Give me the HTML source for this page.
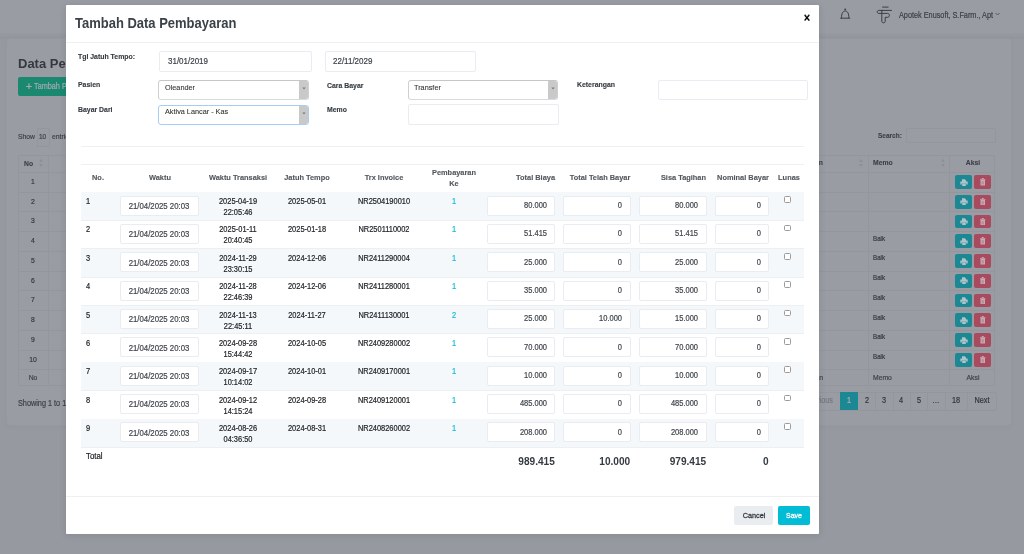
<!DOCTYPE html>
<html><head><meta charset="utf-8"><style>
html,body{margin:0;padding:0;}
body{width:1024px;height:554px;overflow:hidden;position:relative;background:rgb(150,153,160);font-family:"Liberation Sans",sans-serif;}
.t{position:absolute;white-space:nowrap;}
.b{position:absolute;}
</style></head><body>
<div id="root" style="position:absolute;left:0;top:0;width:1024px;height:554px;overflow:hidden;will-change:transform;background:rgb(150,153,160);">
<div class="b" style="left:0px;top:0px;width:1024px;height:33px;background:rgb(153,156,163);"></div>
<div class="b" style="left:0px;top:33.5px;width:1024px;height:5.0px;background:linear-gradient(rgb(150,153,160),rgb(146,149,156));"></div>
<div class="b" style="left:7px;top:38.5px;width:1003.5px;height:386.0px;background:rgb(153,156,163);border-radius:3px;box-shadow:0 0 0 1px rgb(149,152,159),0 1px 4px rgb(145,148,155);"></div>
<div class="t" style="left:18px;transform-origin:0 50%;top:53.64px;line-height:20px;font-size:12.35px;font-weight:bold;color:rgb(52,56,63);transform:scaleX(1.0526);">Data Pembayaran Piutang</div>
<div class="b" style="left:18px;top:76.7px;width:112px;height:19.700000000000003px;background:rgb(26,137,112);border-radius:2px;"></div>
<div class="t" style="left:25.8px;transform-origin:0 50%;top:76.09px;line-height:20px;font-size:8.00px;font-weight:normal;color:rgb(165,170,175);-webkit-text-stroke:0.2px rgb(165,170,175);font-size:11px;">+</div>
<div class="t" style="left:34.3px;transform-origin:0 50%;top:76.10px;line-height:20px;font-size:8.61px;font-weight:normal;color:rgb(165,170,175);transform:scaleX(0.8475);-webkit-text-stroke:0.2px rgb(165,170,175);">Tambah Pembayaran</div>
<div class="t" style="left:18px;transform-origin:0 50%;top:127.09px;line-height:20px;font-size:8.02px;font-weight:normal;color:rgb(60,64,72);transform:scaleX(0.8475);-webkit-text-stroke:0.2px rgb(60,64,72);">Show</div>
<div class="b" style="left:37.3px;top:127.5px;width:12.5px;height:19.5px;border:1px solid rgb(147,150,157);border-radius:2px;background:rgb(153,156,163);box-sizing:border-box;"></div>
<div class="t" style="left:38.5px;transform-origin:0 50%;top:127.09px;line-height:20px;font-size:7.67px;font-weight:normal;color:rgb(60,64,72);transform:scaleX(0.8475);-webkit-text-stroke:0.2px rgb(60,64,72);">10</div>
<div class="t" style="left:52px;transform-origin:0 50%;top:127.09px;line-height:20px;font-size:8.02px;font-weight:normal;color:rgb(60,64,72);transform:scaleX(0.8475);-webkit-text-stroke:0.2px rgb(60,64,72);">entries</div>
<div class="t" style="left:878px;transform-origin:0 50%;top:125.79px;line-height:20px;font-size:7.67px;font-weight:bold;color:rgb(60,64,72);transform:scaleX(0.8475);-webkit-text-stroke:0.12px rgb(60,64,72);">Search:</div>
<div class="b" style="left:905.7px;top:127.6px;width:90.5px;height:15.700000000000017px;border:1px solid rgb(147,150,157);border-radius:2px;box-sizing:border-box;"></div>
<div class="b" style="left:18.4px;top:154.5px;width:977.1px;height:231.8px;border:1px solid rgb(147,150,157);box-sizing:border-box;"></div>
<div class="b" style="left:18.4px;top:171.8px;width:977.1px;height:1.0px;background:rgb(147,150,157);"></div>
<div class="b" style="left:18.4px;top:191.55px;width:977.1px;height:1.0px;background:rgb(147,150,157);"></div>
<div class="b" style="left:18.4px;top:211.3px;width:977.1px;height:1.0px;background:rgb(147,150,157);"></div>
<div class="b" style="left:18.4px;top:231.05px;width:977.1px;height:1.0px;background:rgb(147,150,157);"></div>
<div class="b" style="left:18.4px;top:250.8px;width:977.1px;height:1.0px;background:rgb(147,150,157);"></div>
<div class="b" style="left:18.4px;top:270.55px;width:977.1px;height:1.0px;background:rgb(147,150,157);"></div>
<div class="b" style="left:18.4px;top:290.3px;width:977.1px;height:1.0px;background:rgb(147,150,157);"></div>
<div class="b" style="left:18.4px;top:310.05px;width:977.1px;height:1.0px;background:rgb(147,150,157);"></div>
<div class="b" style="left:18.4px;top:329.8px;width:977.1px;height:1.0px;background:rgb(147,150,157);"></div>
<div class="b" style="left:18.4px;top:349.55px;width:977.1px;height:1.0px;background:rgb(147,150,157);"></div>
<div class="b" style="left:18.4px;top:369.3px;width:977.1px;height:1.0px;background:rgb(147,150,157);"></div>
<div class="b" style="left:48px;top:154.5px;width:1px;height:231.8px;background:rgb(147,150,157);"></div>
<div class="b" style="left:868px;top:154.5px;width:1px;height:231.8px;background:rgb(147,150,157);"></div>
<div class="b" style="left:949px;top:154.5px;width:1px;height:231.8px;background:rgb(147,150,157);"></div>
<div class="t" style="left:23.5px;transform-origin:0 50%;top:153.59px;line-height:20px;font-size:8.02px;font-weight:bold;color:rgb(60,64,72);transform:scaleX(0.8475);-webkit-text-stroke:0.12px rgb(60,64,72);">No</div>
<div class="b" style="left:38.5px;top:158.5px;width:0;height:0;border-left:2px solid transparent;border-right:2px solid transparent;border-bottom:3px solid rgb(140,144,150);"></div>
<div class="b" style="left:38.5px;top:163.5px;width:0;height:0;border-left:2px solid transparent;border-right:2px solid transparent;border-top:3px solid rgb(140,144,150);"></div>
<div class="b" style="left:858.5px;top:158.5px;width:0;height:0;border-left:2px solid transparent;border-right:2px solid transparent;border-bottom:3px solid rgb(140,144,150);"></div>
<div class="b" style="left:858.5px;top:163.5px;width:0;height:0;border-left:2px solid transparent;border-right:2px solid transparent;border-top:3px solid rgb(140,144,150);"></div>
<div class="b" style="left:940.5px;top:158.5px;width:0;height:0;border-left:2px solid transparent;border-right:2px solid transparent;border-bottom:3px solid rgb(140,144,150);"></div>
<div class="b" style="left:940.5px;top:163.5px;width:0;height:0;border-left:2px solid transparent;border-right:2px solid transparent;border-top:3px solid rgb(140,144,150);"></div>
<div class="t" style="left:872.5px;transform-origin:0 50%;top:153.09px;line-height:20px;font-size:8.02px;font-weight:bold;color:rgb(60,64,72);transform:scaleX(0.8475);-webkit-text-stroke:0.12px rgb(60,64,72);">Memo</div>
<div class="t" style="left:522.5px;width:300px;text-align:right;transform-origin:100% 50%;top:153.09px;line-height:20px;font-size:8.02px;font-weight:bold;color:rgb(60,64,72);transform:scaleX(0.8475);-webkit-text-stroke:0.12px rgb(60,64,72);">Keterangan</div>
<div class="t" style="left:822.5px;width:300px;text-align:center;transform-origin:50% 50%;top:153.09px;line-height:20px;font-size:8.02px;font-weight:bold;color:rgb(60,64,72);transform:scaleX(0.8475);-webkit-text-stroke:0.12px rgb(60,64,72);">Aksi</div>
<div class="t" style="left:-117px;width:300px;text-align:center;transform-origin:50% 50%;top:171.79px;line-height:20px;font-size:8.02px;font-weight:normal;color:rgb(52,56,63);transform:scaleX(0.8475);-webkit-text-stroke:0.2px rgb(52,56,63);">1</div>
<div class="b" style="left:954.5px;top:175.1px;width:17.700000000000045px;height:13.900000000000006px;background:rgb(27,136,148);border-radius:2px;"></div>
<div class="b" style="left:974px;top:175.1px;width:17px;height:13.900000000000006px;background:rgb(168,75,95);border-radius:2px;"></div>
<svg class="b" style="left:959.5px;top:178.5px" width="8" height="7.4" viewBox="0 0 8 7.4"><path d="M2 0.3h2.9l1.1 1.1v1.2H2z M0.3 2.6h7.4v2.9H6.2v-1.3H1.8v1.3H0.3z M2.2 4.6h3.6v2.5H2.2z" fill="rgb(175,195,200)"/></svg>
<svg class="b" style="left:980px;top:178.1px" width="5.5" height="7.6" viewBox="0 0 5.5 7.6"><path d="M0 0.9h5.5v0.9H0z M1.8 0.1h1.9v0.9H1.8z M0.5 2.1h4.5v5.4H0.5z" fill="rgb(200,170,178)"/><rect x="1.7" y="3.2" width="2.1" height="3.2" fill="rgb(185,140,150)"/></svg>
<div class="t" style="left:-117px;width:300px;text-align:center;transform-origin:50% 50%;top:191.54px;line-height:20px;font-size:8.02px;font-weight:normal;color:rgb(52,56,63);transform:scaleX(0.8475);-webkit-text-stroke:0.2px rgb(52,56,63);">2</div>
<div class="b" style="left:954.5px;top:194.85px;width:17.700000000000045px;height:13.900000000000006px;background:rgb(27,136,148);border-radius:2px;"></div>
<div class="b" style="left:974px;top:194.85px;width:17px;height:13.900000000000006px;background:rgb(168,75,95);border-radius:2px;"></div>
<svg class="b" style="left:959.5px;top:198.25px" width="8" height="7.4" viewBox="0 0 8 7.4"><path d="M2 0.3h2.9l1.1 1.1v1.2H2z M0.3 2.6h7.4v2.9H6.2v-1.3H1.8v1.3H0.3z M2.2 4.6h3.6v2.5H2.2z" fill="rgb(175,195,200)"/></svg>
<svg class="b" style="left:980px;top:197.85px" width="5.5" height="7.6" viewBox="0 0 5.5 7.6"><path d="M0 0.9h5.5v0.9H0z M1.8 0.1h1.9v0.9H1.8z M0.5 2.1h4.5v5.4H0.5z" fill="rgb(200,170,178)"/><rect x="1.7" y="3.2" width="2.1" height="3.2" fill="rgb(185,140,150)"/></svg>
<div class="t" style="left:-117px;width:300px;text-align:center;transform-origin:50% 50%;top:211.29px;line-height:20px;font-size:8.02px;font-weight:normal;color:rgb(52,56,63);transform:scaleX(0.8475);-webkit-text-stroke:0.2px rgb(52,56,63);">3</div>
<div class="b" style="left:954.5px;top:214.6px;width:17.700000000000045px;height:13.900000000000006px;background:rgb(27,136,148);border-radius:2px;"></div>
<div class="b" style="left:974px;top:214.6px;width:17px;height:13.900000000000006px;background:rgb(168,75,95);border-radius:2px;"></div>
<svg class="b" style="left:959.5px;top:218.0px" width="8" height="7.4" viewBox="0 0 8 7.4"><path d="M2 0.3h2.9l1.1 1.1v1.2H2z M0.3 2.6h7.4v2.9H6.2v-1.3H1.8v1.3H0.3z M2.2 4.6h3.6v2.5H2.2z" fill="rgb(175,195,200)"/></svg>
<svg class="b" style="left:980px;top:217.6px" width="5.5" height="7.6" viewBox="0 0 5.5 7.6"><path d="M0 0.9h5.5v0.9H0z M1.8 0.1h1.9v0.9H1.8z M0.5 2.1h4.5v5.4H0.5z" fill="rgb(200,170,178)"/><rect x="1.7" y="3.2" width="2.1" height="3.2" fill="rgb(185,140,150)"/></svg>
<div class="t" style="left:-117px;width:300px;text-align:center;transform-origin:50% 50%;top:231.04px;line-height:20px;font-size:8.02px;font-weight:normal;color:rgb(52,56,63);transform:scaleX(0.8475);-webkit-text-stroke:0.2px rgb(52,56,63);">4</div>
<div class="t" style="left:872.9px;transform-origin:0 50%;top:228.53px;line-height:20px;font-size:7.32px;font-weight:normal;color:rgb(52,56,63);transform:scaleX(0.8475);-webkit-text-stroke:0.2px rgb(52,56,63);">Baik</div>
<div class="b" style="left:954.5px;top:234.35px;width:17.700000000000045px;height:13.900000000000006px;background:rgb(27,136,148);border-radius:2px;"></div>
<div class="b" style="left:974px;top:234.35px;width:17px;height:13.900000000000006px;background:rgb(168,75,95);border-radius:2px;"></div>
<svg class="b" style="left:959.5px;top:237.75px" width="8" height="7.4" viewBox="0 0 8 7.4"><path d="M2 0.3h2.9l1.1 1.1v1.2H2z M0.3 2.6h7.4v2.9H6.2v-1.3H1.8v1.3H0.3z M2.2 4.6h3.6v2.5H2.2z" fill="rgb(175,195,200)"/></svg>
<svg class="b" style="left:980px;top:237.35px" width="5.5" height="7.6" viewBox="0 0 5.5 7.6"><path d="M0 0.9h5.5v0.9H0z M1.8 0.1h1.9v0.9H1.8z M0.5 2.1h4.5v5.4H0.5z" fill="rgb(200,170,178)"/><rect x="1.7" y="3.2" width="2.1" height="3.2" fill="rgb(185,140,150)"/></svg>
<div class="t" style="left:-117px;width:300px;text-align:center;transform-origin:50% 50%;top:250.79px;line-height:20px;font-size:8.02px;font-weight:normal;color:rgb(52,56,63);transform:scaleX(0.8475);-webkit-text-stroke:0.2px rgb(52,56,63);">5</div>
<div class="t" style="left:872.9px;transform-origin:0 50%;top:248.28px;line-height:20px;font-size:7.32px;font-weight:normal;color:rgb(52,56,63);transform:scaleX(0.8475);-webkit-text-stroke:0.2px rgb(52,56,63);">Baik</div>
<div class="b" style="left:954.5px;top:254.1px;width:17.700000000000045px;height:13.900000000000006px;background:rgb(27,136,148);border-radius:2px;"></div>
<div class="b" style="left:974px;top:254.1px;width:17px;height:13.900000000000006px;background:rgb(168,75,95);border-radius:2px;"></div>
<svg class="b" style="left:959.5px;top:257.5px" width="8" height="7.4" viewBox="0 0 8 7.4"><path d="M2 0.3h2.9l1.1 1.1v1.2H2z M0.3 2.6h7.4v2.9H6.2v-1.3H1.8v1.3H0.3z M2.2 4.6h3.6v2.5H2.2z" fill="rgb(175,195,200)"/></svg>
<svg class="b" style="left:980px;top:257.1px" width="5.5" height="7.6" viewBox="0 0 5.5 7.6"><path d="M0 0.9h5.5v0.9H0z M1.8 0.1h1.9v0.9H1.8z M0.5 2.1h4.5v5.4H0.5z" fill="rgb(200,170,178)"/><rect x="1.7" y="3.2" width="2.1" height="3.2" fill="rgb(185,140,150)"/></svg>
<div class="t" style="left:-117px;width:300px;text-align:center;transform-origin:50% 50%;top:270.54px;line-height:20px;font-size:8.02px;font-weight:normal;color:rgb(52,56,63);transform:scaleX(0.8475);-webkit-text-stroke:0.2px rgb(52,56,63);">6</div>
<div class="t" style="left:872.9px;transform-origin:0 50%;top:268.03px;line-height:20px;font-size:7.32px;font-weight:normal;color:rgb(52,56,63);transform:scaleX(0.8475);-webkit-text-stroke:0.2px rgb(52,56,63);">Baik</div>
<div class="b" style="left:954.5px;top:273.85px;width:17.700000000000045px;height:13.899999999999977px;background:rgb(27,136,148);border-radius:2px;"></div>
<div class="b" style="left:974px;top:273.85px;width:17px;height:13.899999999999977px;background:rgb(168,75,95);border-radius:2px;"></div>
<svg class="b" style="left:959.5px;top:277.25px" width="8" height="7.4" viewBox="0 0 8 7.4"><path d="M2 0.3h2.9l1.1 1.1v1.2H2z M0.3 2.6h7.4v2.9H6.2v-1.3H1.8v1.3H0.3z M2.2 4.6h3.6v2.5H2.2z" fill="rgb(175,195,200)"/></svg>
<svg class="b" style="left:980px;top:276.85px" width="5.5" height="7.6" viewBox="0 0 5.5 7.6"><path d="M0 0.9h5.5v0.9H0z M1.8 0.1h1.9v0.9H1.8z M0.5 2.1h4.5v5.4H0.5z" fill="rgb(200,170,178)"/><rect x="1.7" y="3.2" width="2.1" height="3.2" fill="rgb(185,140,150)"/></svg>
<div class="t" style="left:-117px;width:300px;text-align:center;transform-origin:50% 50%;top:290.29px;line-height:20px;font-size:8.02px;font-weight:normal;color:rgb(52,56,63);transform:scaleX(0.8475);-webkit-text-stroke:0.2px rgb(52,56,63);">7</div>
<div class="t" style="left:872.9px;transform-origin:0 50%;top:287.78px;line-height:20px;font-size:7.32px;font-weight:normal;color:rgb(52,56,63);transform:scaleX(0.8475);-webkit-text-stroke:0.2px rgb(52,56,63);">Baik</div>
<div class="b" style="left:954.5px;top:293.6px;width:17.700000000000045px;height:13.899999999999977px;background:rgb(27,136,148);border-radius:2px;"></div>
<div class="b" style="left:974px;top:293.6px;width:17px;height:13.899999999999977px;background:rgb(168,75,95);border-radius:2px;"></div>
<svg class="b" style="left:959.5px;top:297.0px" width="8" height="7.4" viewBox="0 0 8 7.4"><path d="M2 0.3h2.9l1.1 1.1v1.2H2z M0.3 2.6h7.4v2.9H6.2v-1.3H1.8v1.3H0.3z M2.2 4.6h3.6v2.5H2.2z" fill="rgb(175,195,200)"/></svg>
<svg class="b" style="left:980px;top:296.6px" width="5.5" height="7.6" viewBox="0 0 5.5 7.6"><path d="M0 0.9h5.5v0.9H0z M1.8 0.1h1.9v0.9H1.8z M0.5 2.1h4.5v5.4H0.5z" fill="rgb(200,170,178)"/><rect x="1.7" y="3.2" width="2.1" height="3.2" fill="rgb(185,140,150)"/></svg>
<div class="t" style="left:-117px;width:300px;text-align:center;transform-origin:50% 50%;top:310.04px;line-height:20px;font-size:8.02px;font-weight:normal;color:rgb(52,56,63);transform:scaleX(0.8475);-webkit-text-stroke:0.2px rgb(52,56,63);">8</div>
<div class="t" style="left:872.9px;transform-origin:0 50%;top:307.53px;line-height:20px;font-size:7.32px;font-weight:normal;color:rgb(52,56,63);transform:scaleX(0.8475);-webkit-text-stroke:0.2px rgb(52,56,63);">Baik</div>
<div class="b" style="left:954.5px;top:313.35px;width:17.700000000000045px;height:13.899999999999977px;background:rgb(27,136,148);border-radius:2px;"></div>
<div class="b" style="left:974px;top:313.35px;width:17px;height:13.899999999999977px;background:rgb(168,75,95);border-radius:2px;"></div>
<svg class="b" style="left:959.5px;top:316.75px" width="8" height="7.4" viewBox="0 0 8 7.4"><path d="M2 0.3h2.9l1.1 1.1v1.2H2z M0.3 2.6h7.4v2.9H6.2v-1.3H1.8v1.3H0.3z M2.2 4.6h3.6v2.5H2.2z" fill="rgb(175,195,200)"/></svg>
<svg class="b" style="left:980px;top:316.35px" width="5.5" height="7.6" viewBox="0 0 5.5 7.6"><path d="M0 0.9h5.5v0.9H0z M1.8 0.1h1.9v0.9H1.8z M0.5 2.1h4.5v5.4H0.5z" fill="rgb(200,170,178)"/><rect x="1.7" y="3.2" width="2.1" height="3.2" fill="rgb(185,140,150)"/></svg>
<div class="t" style="left:-117px;width:300px;text-align:center;transform-origin:50% 50%;top:329.79px;line-height:20px;font-size:8.02px;font-weight:normal;color:rgb(52,56,63);transform:scaleX(0.8475);-webkit-text-stroke:0.2px rgb(52,56,63);">9</div>
<div class="t" style="left:872.9px;transform-origin:0 50%;top:327.28px;line-height:20px;font-size:7.32px;font-weight:normal;color:rgb(52,56,63);transform:scaleX(0.8475);-webkit-text-stroke:0.2px rgb(52,56,63);">Baik</div>
<div class="b" style="left:954.5px;top:333.1px;width:17.700000000000045px;height:13.899999999999977px;background:rgb(27,136,148);border-radius:2px;"></div>
<div class="b" style="left:974px;top:333.1px;width:17px;height:13.899999999999977px;background:rgb(168,75,95);border-radius:2px;"></div>
<svg class="b" style="left:959.5px;top:336.5px" width="8" height="7.4" viewBox="0 0 8 7.4"><path d="M2 0.3h2.9l1.1 1.1v1.2H2z M0.3 2.6h7.4v2.9H6.2v-1.3H1.8v1.3H0.3z M2.2 4.6h3.6v2.5H2.2z" fill="rgb(175,195,200)"/></svg>
<svg class="b" style="left:980px;top:336.1px" width="5.5" height="7.6" viewBox="0 0 5.5 7.6"><path d="M0 0.9h5.5v0.9H0z M1.8 0.1h1.9v0.9H1.8z M0.5 2.1h4.5v5.4H0.5z" fill="rgb(200,170,178)"/><rect x="1.7" y="3.2" width="2.1" height="3.2" fill="rgb(185,140,150)"/></svg>
<div class="t" style="left:-117px;width:300px;text-align:center;transform-origin:50% 50%;top:349.54px;line-height:20px;font-size:8.02px;font-weight:normal;color:rgb(52,56,63);transform:scaleX(0.8475);-webkit-text-stroke:0.2px rgb(52,56,63);">10</div>
<div class="t" style="left:872.9px;transform-origin:0 50%;top:347.03px;line-height:20px;font-size:7.32px;font-weight:normal;color:rgb(52,56,63);transform:scaleX(0.8475);-webkit-text-stroke:0.2px rgb(52,56,63);">Baik</div>
<div class="b" style="left:954.5px;top:352.85px;width:17.700000000000045px;height:13.899999999999977px;background:rgb(27,136,148);border-radius:2px;"></div>
<div class="b" style="left:974px;top:352.85px;width:17px;height:13.899999999999977px;background:rgb(168,75,95);border-radius:2px;"></div>
<svg class="b" style="left:959.5px;top:356.25px" width="8" height="7.4" viewBox="0 0 8 7.4"><path d="M2 0.3h2.9l1.1 1.1v1.2H2z M0.3 2.6h7.4v2.9H6.2v-1.3H1.8v1.3H0.3z M2.2 4.6h3.6v2.5H2.2z" fill="rgb(175,195,200)"/></svg>
<svg class="b" style="left:980px;top:355.85px" width="5.5" height="7.6" viewBox="0 0 5.5 7.6"><path d="M0 0.9h5.5v0.9H0z M1.8 0.1h1.9v0.9H1.8z M0.5 2.1h4.5v5.4H0.5z" fill="rgb(200,170,178)"/><rect x="1.7" y="3.2" width="2.1" height="3.2" fill="rgb(185,140,150)"/></svg>
<div class="t" style="left:-117px;width:300px;text-align:center;transform-origin:50% 50%;top:367.99px;line-height:20px;font-size:8.02px;font-weight:normal;color:rgb(60,64,72);transform:scaleX(0.8475);-webkit-text-stroke:0.2px rgb(60,64,72);">No</div>
<div class="t" style="left:872.5px;transform-origin:0 50%;top:367.99px;line-height:20px;font-size:8.02px;font-weight:normal;color:rgb(60,64,72);transform:scaleX(0.8475);-webkit-text-stroke:0.2px rgb(60,64,72);">Memo</div>
<div class="t" style="left:522.5px;width:300px;text-align:right;transform-origin:100% 50%;top:367.99px;line-height:20px;font-size:8.02px;font-weight:normal;color:rgb(60,64,72);transform:scaleX(0.8475);-webkit-text-stroke:0.2px rgb(60,64,72);">Keterangan</div>
<div class="t" style="left:822.5px;width:300px;text-align:center;transform-origin:50% 50%;top:367.99px;line-height:20px;font-size:8.02px;font-weight:normal;color:rgb(60,64,72);transform:scaleX(0.8475);-webkit-text-stroke:0.2px rgb(60,64,72);">Aksi</div>
<div class="t" style="left:18px;transform-origin:0 50%;top:393.20px;line-height:20px;font-size:8.76px;font-weight:normal;color:rgb(60,64,72);transform:scaleX(0.8333);-webkit-text-stroke:0.2px rgb(60,64,72);">Showing 1 to 10 of 177 entries</div>
<div class="b" style="left:800px;top:391.7px;width:197px;height:19.100000000000023px;border:1px solid rgb(147,150,157);border-radius:3px;box-sizing:border-box;"></div>
<div class="b" style="left:840px;top:391.7px;width:18px;height:18.400000000000034px;background:rgb(27,136,148);"></div>
<div class="t" style="left:533px;width:300px;text-align:right;transform-origin:100% 50%;top:391.29px;line-height:20px;font-size:8.18px;font-weight:normal;color:rgb(118,122,129);transform:scaleX(0.8929);-webkit-text-stroke:0.2px rgb(118,122,129);">Previous</div>
<div class="t" style="left:699.0px;width:300px;text-align:center;transform-origin:50% 50%;top:391.29px;line-height:20px;font-size:8.18px;font-weight:normal;color:rgb(170,175,180);transform:scaleX(0.8929);-webkit-text-stroke:0.2px rgb(170,175,180);">1</div>
<div class="t" style="left:716.7px;width:300px;text-align:center;transform-origin:50% 50%;top:391.29px;line-height:20px;font-size:8.18px;font-weight:normal;color:rgb(50,54,62);transform:scaleX(0.8929);-webkit-text-stroke:0.2px rgb(50,54,62);">2</div>
<div class="b" style="left:875.4px;top:391.7px;width:1.0px;height:18.400000000000034px;background:rgb(147,150,157);"></div>
<div class="t" style="left:734.05px;width:300px;text-align:center;transform-origin:50% 50%;top:391.29px;line-height:20px;font-size:8.18px;font-weight:normal;color:rgb(50,54,62);transform:scaleX(0.8929);-webkit-text-stroke:0.2px rgb(50,54,62);">3</div>
<div class="b" style="left:892.7px;top:391.7px;width:1.0px;height:18.400000000000034px;background:rgb(147,150,157);"></div>
<div class="t" style="left:751.25px;width:300px;text-align:center;transform-origin:50% 50%;top:391.29px;line-height:20px;font-size:8.18px;font-weight:normal;color:rgb(50,54,62);transform:scaleX(0.8929);-webkit-text-stroke:0.2px rgb(50,54,62);">4</div>
<div class="b" style="left:909.8px;top:391.7px;width:1.0px;height:18.400000000000034px;background:rgb(147,150,157);"></div>
<div class="t" style="left:768.5999999999999px;width:300px;text-align:center;transform-origin:50% 50%;top:391.29px;line-height:20px;font-size:8.18px;font-weight:normal;color:rgb(50,54,62);transform:scaleX(0.8929);-webkit-text-stroke:0.2px rgb(50,54,62);">5</div>
<div class="b" style="left:927.4px;top:391.7px;width:1.0px;height:18.400000000000034px;background:rgb(147,150,157);"></div>
<div class="t" style="left:786.4px;width:300px;text-align:center;transform-origin:50% 50%;top:391.29px;line-height:20px;font-size:8.18px;font-weight:normal;color:rgb(50,54,62);transform:scaleX(0.8929);-webkit-text-stroke:0.2px rgb(50,54,62);">…</div>
<div class="b" style="left:945.4px;top:391.7px;width:1.0px;height:18.400000000000034px;background:rgb(147,150,157);"></div>
<div class="t" style="left:806.2px;width:300px;text-align:center;transform-origin:50% 50%;top:391.29px;line-height:20px;font-size:8.18px;font-weight:normal;color:rgb(50,54,62);transform:scaleX(0.8929);-webkit-text-stroke:0.2px rgb(50,54,62);">18</div>
<div class="b" style="left:967px;top:391.7px;width:1px;height:18.400000000000034px;background:rgb(147,150,157);"></div>
<div class="t" style="left:831.65px;width:300px;text-align:center;transform-origin:50% 50%;top:391.29px;line-height:20px;font-size:8.18px;font-weight:normal;color:rgb(50,54,62);transform:scaleX(0.8929);-webkit-text-stroke:0.2px rgb(50,54,62);">Next</div>
<svg class="b" style="left:0;top:0" width="1024" height="30" viewBox="0 0 1024 30"><g stroke="rgb(48,52,60)" stroke-width="0.9" fill="none" stroke-linecap="round" stroke-linejoin="round"><path d="M841.5 17.8C841.5 13.2 843 11 845.2 11S848.9 13.2 848.9 17.8M840.6 18.2H849.8"/><path d="M882.6 7.1H888.2M882.3 10.4H891.5M882.3 10.4H879C876.6 10.4 876.6 13.4 879 13.4H887.6C890 13.3 890 17.3 887.6 17.3H885.2V21.3C885.2 23.3 881.8 23.3 881.8 21.3V10.4"/></g><circle cx="845.2" cy="9.3" r="0.85" fill="rgb(48,52,60)"/></svg>
<div class="t" style="left:898.5px;transform-origin:0 50%;top:4.60px;line-height:20px;font-size:8.76px;font-weight:normal;color:rgb(60,64,72);transform:scaleX(0.8333);-webkit-text-stroke:0.2px rgb(60,64,72);">Apotek Enusoft, S.Farm., Apt</div>
<svg class="b" style="left:995px;top:12px" width="5" height="4" viewBox="0 0 5 4"><path d="M0.5 1l2 2 2-2" stroke="rgb(70,74,82)" stroke-width="0.8" fill="none"/></svg>
<div class="b" style="left:66px;top:5px;width:753px;height:529px;background:#fff;border-radius:1px;box-shadow:0 1px 7px rgba(20,25,35,0.13);"></div>
<div class="t" style="left:75px;transform-origin:0 50%;top:14.36px;line-height:20px;font-size:13.78px;font-weight:bold;color:#3b4148;transform:scaleX(0.9434);">Tambah Data Pembayaran</div>
<div class="t" style="left:657px;width:300px;text-align:center;transform-origin:50% 50%;top:8.15px;line-height:20px;font-size:12.98px;font-weight:bold;color:#000;transform:scaleX(0.8475);-webkit-text-stroke:0.12px #000;">×</div>
<div class="b" style="left:66px;top:42px;width:753px;height:1px;background:#eef0f3;"></div>
<div class="t" style="left:77.5px;transform-origin:0 50%;top:47.08px;line-height:20px;font-size:7.11px;font-weight:bold;color:#343a40;transform:scaleX(0.9709);-webkit-text-stroke:0.12px #343a40;">Tgl Jatuh Tempo:</div>
<div class="b" style="left:159px;top:51.3px;width:153.2px;height:20.900000000000006px;border:1px solid #e9ecf0;border-radius:2px;background:#fff;box-sizing:border-box;"></div>
<div class="t" style="left:167.5px;transform-origin:0 50%;top:51.00px;line-height:20px;font-size:8.64px;font-weight:normal;color:#3d4349;transform:scaleX(0.9259);-webkit-text-stroke:0.2px #3d4349;">31/01/2019</div>
<div class="b" style="left:324.5px;top:51.3px;width:151.89999999999998px;height:20.900000000000006px;border:1px solid #e9ecf0;border-radius:2px;background:#fff;box-sizing:border-box;"></div>
<div class="t" style="left:332.5px;transform-origin:0 50%;top:51.00px;line-height:20px;font-size:8.64px;font-weight:normal;color:#3d4349;transform:scaleX(0.9259);-webkit-text-stroke:0.2px #3d4349;">22/11/2029</div>
<div class="t" style="left:77.5px;transform-origin:0 50%;top:75.28px;line-height:20px;font-size:7.11px;font-weight:bold;color:#343a40;transform:scaleX(0.9709);-webkit-text-stroke:0.12px #343a40;">Pasien</div>
<div class="b" style="left:158.4px;top:80px;width:150.6px;height:20px;border:1px solid #d0d0d0;border-top-color:#c6c6c6;border-bottom-color:#dadada;border-radius:3px;background:#fff;box-sizing:border-box;overflow:hidden;"><div style="position:absolute;right:0;top:0;bottom:0;width:9.3px;background:#c9c9c9;"></div><svg style="position:absolute;left:142.6px;top:6.2px" width="4" height="3" viewBox="0 0 4 3"><path d="M0.3 0.4H3.7L2 2.6z" fill="#7d7d7d"/></svg></div>
<div class="t" style="left:164.7px;transform-origin:0 50%;top:77.89px;line-height:20px;font-size:8.03px;font-weight:normal;color:#333;transform:scaleX(0.9091);-webkit-text-stroke:0.1px #333;">Oleander</div>
<div class="t" style="left:326.7px;transform-origin:0 50%;top:75.78px;line-height:20px;font-size:7.11px;font-weight:bold;color:#343a40;transform:scaleX(0.9709);-webkit-text-stroke:0.12px #343a40;">Cara Bayar</div>
<div class="b" style="left:408.4px;top:80px;width:150.10000000000002px;height:19.799999999999997px;border:1px solid #d0d0d0;border-top-color:#c6c6c6;border-bottom-color:#dadada;border-radius:3px;background:#fff;box-sizing:border-box;overflow:hidden;"><div style="position:absolute;right:0;top:0;bottom:0;width:9.3px;background:#c9c9c9;"></div><svg style="position:absolute;left:142.10000000000002px;top:6.2px" width="4" height="3" viewBox="0 0 4 3"><path d="M0.3 0.4H3.7L2 2.6z" fill="#7d7d7d"/></svg></div>
<div class="t" style="left:414.3px;transform-origin:0 50%;top:77.89px;line-height:20px;font-size:8.03px;font-weight:normal;color:#333;transform:scaleX(0.9091);-webkit-text-stroke:0.1px #333;">Transfer</div>
<div class="t" style="left:576.5px;transform-origin:0 50%;top:75.38px;line-height:20px;font-size:7.11px;font-weight:bold;color:#343a40;transform:scaleX(0.9709);-webkit-text-stroke:0.12px #343a40;">Keterangan</div>
<div class="b" style="left:657.8px;top:80.2px;width:150.5000000000001px;height:20.099999999999994px;border:1px solid #e9ecf0;border-radius:2px;background:#fff;box-sizing:border-box;"></div>
<div class="t" style="left:77.5px;transform-origin:0 50%;top:99.78px;line-height:20px;font-size:7.11px;font-weight:bold;color:#343a40;transform:scaleX(0.9709);-webkit-text-stroke:0.12px #343a40;">Bayar Dari</div>
<div class="b" style="left:158.4px;top:104.5px;width:150.6px;height:20.5px;border:1px solid #a8cdf2;border-radius:3px;background:#fff;box-sizing:border-box;overflow:hidden;"><div style="position:absolute;right:0;top:0;bottom:0;width:9.3px;background:#c9c9c9;"></div><svg style="position:absolute;left:142.6px;top:6.2px" width="4" height="3" viewBox="0 0 4 3"><path d="M0.3 0.4H3.7L2 2.6z" fill="#7d7d7d"/></svg></div>
<div class="t" style="left:164.7px;transform-origin:0 50%;top:101.89px;line-height:20px;font-size:8.03px;font-weight:normal;color:#333;transform:scaleX(0.9091);-webkit-text-stroke:0.1px #333;">Aktiva Lancar - Kas</div>
<div class="t" style="left:326.7px;transform-origin:0 50%;top:99.78px;line-height:20px;font-size:7.11px;font-weight:bold;color:#343a40;transform:scaleX(0.9709);-webkit-text-stroke:0.12px #343a40;">Memo</div>
<div class="b" style="left:408.4px;top:104.2px;width:150.80000000000007px;height:20.799999999999997px;border:1px solid #e9ecf0;border-radius:2px;background:#fff;box-sizing:border-box;"></div>
<div class="b" style="left:81px;top:146px;width:723px;height:1px;background:#eef0f3;"></div>
<div class="b" style="left:81px;top:164px;width:723px;height:1px;background:#eef0f3;"></div>
<div class="t" style="left:-52px;width:300px;text-align:center;transform-origin:50% 50%;top:168.09px;line-height:20px;font-size:7.77px;font-weight:bold;color:#52575c;transform:scaleX(0.9524);-webkit-text-stroke:0.12px #52575c;">No.</div>
<div class="t" style="left:9.5px;width:300px;text-align:center;transform-origin:50% 50%;top:168.09px;line-height:20px;font-size:7.77px;font-weight:bold;color:#52575c;transform:scaleX(0.9524);-webkit-text-stroke:0.12px #52575c;">Waktu</div>
<div class="t" style="left:88px;width:300px;text-align:center;transform-origin:50% 50%;top:168.09px;line-height:20px;font-size:7.77px;font-weight:bold;color:#52575c;transform:scaleX(0.9524);-webkit-text-stroke:0.12px #52575c;">Waktu Transaksi</div>
<div class="t" style="left:157.39999999999998px;width:300px;text-align:center;transform-origin:50% 50%;top:168.09px;line-height:20px;font-size:7.77px;font-weight:bold;color:#52575c;transform:scaleX(0.9524);-webkit-text-stroke:0.12px #52575c;">Jatuh Tempo</div>
<div class="t" style="left:233.5px;width:300px;text-align:center;transform-origin:50% 50%;top:168.09px;line-height:20px;font-size:7.77px;font-weight:bold;color:#52575c;transform:scaleX(0.9524);-webkit-text-stroke:0.12px #52575c;">Trx Invoice</div>
<div class="t" style="left:304px;width:300px;text-align:center;transform-origin:50% 50%;top:162.79px;line-height:20px;font-size:7.77px;font-weight:bold;color:#52575c;transform:scaleX(0.9524);-webkit-text-stroke:0.12px #52575c;">Pembayaran</div>
<div class="t" style="left:304px;width:300px;text-align:center;transform-origin:50% 50%;top:174.29px;line-height:20px;font-size:7.77px;font-weight:bold;color:#52575c;transform:scaleX(0.9524);-webkit-text-stroke:0.12px #52575c;">Ke</div>
<div class="t" style="left:254.60000000000002px;width:300px;text-align:right;transform-origin:100% 50%;top:168.09px;line-height:20px;font-size:7.77px;font-weight:bold;color:#52575c;transform:scaleX(0.9524);-webkit-text-stroke:0.12px #52575c;">Total Biaya</div>
<div class="t" style="left:450px;width:300px;text-align:center;transform-origin:50% 50%;top:168.09px;line-height:20px;font-size:7.77px;font-weight:bold;color:#52575c;transform:scaleX(0.9524);-webkit-text-stroke:0.12px #52575c;">Total Telah Bayar</div>
<div class="t" style="left:406.4px;width:300px;text-align:right;transform-origin:100% 50%;top:168.09px;line-height:20px;font-size:7.77px;font-weight:bold;color:#52575c;transform:scaleX(0.9524);-webkit-text-stroke:0.12px #52575c;">Sisa Tagihan</div>
<div class="t" style="left:592.8px;width:300px;text-align:center;transform-origin:50% 50%;top:168.09px;line-height:20px;font-size:7.77px;font-weight:bold;color:#52575c;transform:scaleX(0.9524);-webkit-text-stroke:0.12px #52575c;">Nominal Bayar</div>
<div class="t" style="left:638.6px;width:300px;text-align:center;transform-origin:50% 50%;top:168.09px;line-height:20px;font-size:7.77px;font-weight:bold;color:#52575c;transform:scaleX(0.9524);-webkit-text-stroke:0.12px #52575c;">Lunas</div>
<div class="b" style="left:81px;top:192.2px;width:723px;height:28.349999999999994px;background:#f5f8fb;"></div>
<div class="b" style="left:81px;top:220.04999999999998px;width:723px;height:0.5px;background:#edf0f3;"></div>
<div class="t" style="left:85.6px;transform-origin:0 50%;top:191.10px;line-height:20px;font-size:8.42px;font-weight:normal;color:#212529;transform:scaleX(0.8850);-webkit-text-stroke:0.2px #212529;">1</div>
<div class="b" style="left:120.3px;top:195.6px;width:78.89999999999999px;height:20.0px;border:1px solid #e9ecf0;border-radius:2px;background:#fff;box-sizing:border-box;"></div>
<div class="t" style="left:9.400000000000006px;width:300px;text-align:center;transform-origin:50% 50%;top:196.00px;line-height:20px;font-size:8.58px;font-weight:normal;color:#40464c;transform:scaleX(0.9091);-webkit-text-stroke:0.2px #40464c;">21/04/2025 20:03</div>
<div class="t" style="left:88px;width:300px;text-align:center;transform-origin:50% 50%;top:191.10px;line-height:20px;font-size:8.42px;font-weight:normal;color:#212529;transform:scaleX(0.8850);-webkit-text-stroke:0.2px #212529;">2025-04-19</div>
<div class="t" style="left:88px;width:300px;text-align:center;transform-origin:50% 50%;top:202.10px;line-height:20px;font-size:8.42px;font-weight:normal;color:#212529;transform:scaleX(0.8850);-webkit-text-stroke:0.2px #212529;">22:05:46</div>
<div class="t" style="left:157.2px;width:300px;text-align:center;transform-origin:50% 50%;top:191.10px;line-height:20px;font-size:8.42px;font-weight:normal;color:#212529;transform:scaleX(0.8850);-webkit-text-stroke:0.2px #212529;">2025-05-01</div>
<div class="t" style="left:233.5px;width:300px;text-align:center;transform-origin:50% 50%;top:191.10px;line-height:20px;font-size:8.42px;font-weight:normal;color:#212529;transform:scaleX(0.8850);-webkit-text-stroke:0.2px #212529;">NR2504190010</div>
<div class="t" style="left:304px;width:300px;text-align:center;transform-origin:50% 50%;top:191.10px;line-height:20px;font-size:8.42px;font-weight:normal;color:#12bdd6;transform:scaleX(0.8850);-webkit-text-stroke:0.2px #12bdd6;">1</div>
<div class="b" style="left:487.2px;top:195.6px;width:68.10000000000008px;height:20.0px;border:1px solid #e9ecf0;border-radius:2px;background:#fff;box-sizing:border-box;"></div>
<div class="t" style="left:246.79999999999995px;width:300px;text-align:right;transform-origin:100% 50%;top:195.99px;line-height:20px;font-size:8.25px;font-weight:normal;color:#40464c;transform:scaleX(0.9091);-webkit-text-stroke:0.2px #40464c;">80.000</div>
<div class="b" style="left:563.4px;top:195.6px;width:67.70000000000005px;height:20.0px;border:1px solid #e9ecf0;border-radius:2px;background:#fff;box-sizing:border-box;"></div>
<div class="t" style="left:322.29999999999995px;width:300px;text-align:right;transform-origin:100% 50%;top:195.99px;line-height:20px;font-size:8.25px;font-weight:normal;color:#40464c;transform:scaleX(0.9091);-webkit-text-stroke:0.2px #40464c;">0</div>
<div class="b" style="left:639.4px;top:195.6px;width:67.70000000000005px;height:20.0px;border:1px solid #e9ecf0;border-radius:2px;background:#fff;box-sizing:border-box;"></div>
<div class="t" style="left:398.20000000000005px;width:300px;text-align:right;transform-origin:100% 50%;top:195.99px;line-height:20px;font-size:8.25px;font-weight:normal;color:#40464c;transform:scaleX(0.9091);-webkit-text-stroke:0.2px #40464c;">80.000</div>
<div class="b" style="left:715.4px;top:195.6px;width:54.000000000000114px;height:20.0px;border:1px solid #e9ecf0;border-radius:2px;background:#fff;box-sizing:border-box;"></div>
<div class="t" style="left:460.70000000000005px;width:300px;text-align:right;transform-origin:100% 50%;top:195.99px;line-height:20px;font-size:8.25px;font-weight:normal;color:#40464c;transform:scaleX(0.9091);-webkit-text-stroke:0.2px #40464c;">0</div>
<div class="b" style="left:784.2px;top:196.2px;width:6.699999999999932px;height:6.800000000000011px;border:0.7px solid #9a9a9a;border-radius:1.5px;background:#fff;box-sizing:border-box;"></div>
<div class="b" style="left:81px;top:248.39999999999998px;width:723px;height:0.5px;background:#edf0f3;"></div>
<div class="t" style="left:85.6px;transform-origin:0 50%;top:219.45px;line-height:20px;font-size:8.42px;font-weight:normal;color:#212529;transform:scaleX(0.8850);-webkit-text-stroke:0.2px #212529;">2</div>
<div class="b" style="left:120.3px;top:223.95px;width:78.89999999999999px;height:20.0px;border:1px solid #e9ecf0;border-radius:2px;background:#fff;box-sizing:border-box;"></div>
<div class="t" style="left:9.400000000000006px;width:300px;text-align:center;transform-origin:50% 50%;top:224.35px;line-height:20px;font-size:8.58px;font-weight:normal;color:#40464c;transform:scaleX(0.9091);-webkit-text-stroke:0.2px #40464c;">21/04/2025 20:03</div>
<div class="t" style="left:88px;width:300px;text-align:center;transform-origin:50% 50%;top:219.45px;line-height:20px;font-size:8.42px;font-weight:normal;color:#212529;transform:scaleX(0.8850);-webkit-text-stroke:0.2px #212529;">2025-01-11</div>
<div class="t" style="left:88px;width:300px;text-align:center;transform-origin:50% 50%;top:230.45px;line-height:20px;font-size:8.42px;font-weight:normal;color:#212529;transform:scaleX(0.8850);-webkit-text-stroke:0.2px #212529;">20:40:45</div>
<div class="t" style="left:157.2px;width:300px;text-align:center;transform-origin:50% 50%;top:219.45px;line-height:20px;font-size:8.42px;font-weight:normal;color:#212529;transform:scaleX(0.8850);-webkit-text-stroke:0.2px #212529;">2025-01-18</div>
<div class="t" style="left:233.5px;width:300px;text-align:center;transform-origin:50% 50%;top:219.45px;line-height:20px;font-size:8.42px;font-weight:normal;color:#212529;transform:scaleX(0.8850);-webkit-text-stroke:0.2px #212529;">NR2501110002</div>
<div class="t" style="left:304px;width:300px;text-align:center;transform-origin:50% 50%;top:219.45px;line-height:20px;font-size:8.42px;font-weight:normal;color:#12bdd6;transform:scaleX(0.8850);-webkit-text-stroke:0.2px #12bdd6;">1</div>
<div class="b" style="left:487.2px;top:223.95px;width:68.10000000000008px;height:20.0px;border:1px solid #e9ecf0;border-radius:2px;background:#fff;box-sizing:border-box;"></div>
<div class="t" style="left:246.79999999999995px;width:300px;text-align:right;transform-origin:100% 50%;top:224.34px;line-height:20px;font-size:8.25px;font-weight:normal;color:#40464c;transform:scaleX(0.9091);-webkit-text-stroke:0.2px #40464c;">51.415</div>
<div class="b" style="left:563.4px;top:223.95px;width:67.70000000000005px;height:20.0px;border:1px solid #e9ecf0;border-radius:2px;background:#fff;box-sizing:border-box;"></div>
<div class="t" style="left:322.29999999999995px;width:300px;text-align:right;transform-origin:100% 50%;top:224.34px;line-height:20px;font-size:8.25px;font-weight:normal;color:#40464c;transform:scaleX(0.9091);-webkit-text-stroke:0.2px #40464c;">0</div>
<div class="b" style="left:639.4px;top:223.95px;width:67.70000000000005px;height:20.0px;border:1px solid #e9ecf0;border-radius:2px;background:#fff;box-sizing:border-box;"></div>
<div class="t" style="left:398.20000000000005px;width:300px;text-align:right;transform-origin:100% 50%;top:224.34px;line-height:20px;font-size:8.25px;font-weight:normal;color:#40464c;transform:scaleX(0.9091);-webkit-text-stroke:0.2px #40464c;">51.415</div>
<div class="b" style="left:715.4px;top:223.95px;width:54.000000000000114px;height:20.0px;border:1px solid #e9ecf0;border-radius:2px;background:#fff;box-sizing:border-box;"></div>
<div class="t" style="left:460.70000000000005px;width:300px;text-align:right;transform-origin:100% 50%;top:224.34px;line-height:20px;font-size:8.25px;font-weight:normal;color:#40464c;transform:scaleX(0.9091);-webkit-text-stroke:0.2px #40464c;">0</div>
<div class="b" style="left:784.2px;top:224.54999999999998px;width:6.699999999999932px;height:6.800000000000011px;border:0.7px solid #9a9a9a;border-radius:1.5px;background:#fff;box-sizing:border-box;"></div>
<div class="b" style="left:81px;top:248.89999999999998px;width:723px;height:28.350000000000023px;background:#f5f8fb;"></div>
<div class="b" style="left:81px;top:276.75px;width:723px;height:0.5px;background:#edf0f3;"></div>
<div class="t" style="left:85.6px;transform-origin:0 50%;top:247.80px;line-height:20px;font-size:8.42px;font-weight:normal;color:#212529;transform:scaleX(0.8850);-webkit-text-stroke:0.2px #212529;">3</div>
<div class="b" style="left:120.3px;top:252.29999999999998px;width:78.89999999999999px;height:19.99999999999997px;border:1px solid #e9ecf0;border-radius:2px;background:#fff;box-sizing:border-box;"></div>
<div class="t" style="left:9.400000000000006px;width:300px;text-align:center;transform-origin:50% 50%;top:252.70px;line-height:20px;font-size:8.58px;font-weight:normal;color:#40464c;transform:scaleX(0.9091);-webkit-text-stroke:0.2px #40464c;">21/04/2025 20:03</div>
<div class="t" style="left:88px;width:300px;text-align:center;transform-origin:50% 50%;top:247.80px;line-height:20px;font-size:8.42px;font-weight:normal;color:#212529;transform:scaleX(0.8850);-webkit-text-stroke:0.2px #212529;">2024-11-29</div>
<div class="t" style="left:88px;width:300px;text-align:center;transform-origin:50% 50%;top:258.80px;line-height:20px;font-size:8.42px;font-weight:normal;color:#212529;transform:scaleX(0.8850);-webkit-text-stroke:0.2px #212529;">23:30:15</div>
<div class="t" style="left:157.2px;width:300px;text-align:center;transform-origin:50% 50%;top:247.80px;line-height:20px;font-size:8.42px;font-weight:normal;color:#212529;transform:scaleX(0.8850);-webkit-text-stroke:0.2px #212529;">2024-12-06</div>
<div class="t" style="left:233.5px;width:300px;text-align:center;transform-origin:50% 50%;top:247.80px;line-height:20px;font-size:8.42px;font-weight:normal;color:#212529;transform:scaleX(0.8850);-webkit-text-stroke:0.2px #212529;">NR2411290004</div>
<div class="t" style="left:304px;width:300px;text-align:center;transform-origin:50% 50%;top:247.80px;line-height:20px;font-size:8.42px;font-weight:normal;color:#12bdd6;transform:scaleX(0.8850);-webkit-text-stroke:0.2px #12bdd6;">1</div>
<div class="b" style="left:487.2px;top:252.29999999999998px;width:68.10000000000008px;height:19.99999999999997px;border:1px solid #e9ecf0;border-radius:2px;background:#fff;box-sizing:border-box;"></div>
<div class="t" style="left:246.79999999999995px;width:300px;text-align:right;transform-origin:100% 50%;top:252.69px;line-height:20px;font-size:8.25px;font-weight:normal;color:#40464c;transform:scaleX(0.9091);-webkit-text-stroke:0.2px #40464c;">25.000</div>
<div class="b" style="left:563.4px;top:252.29999999999998px;width:67.70000000000005px;height:19.99999999999997px;border:1px solid #e9ecf0;border-radius:2px;background:#fff;box-sizing:border-box;"></div>
<div class="t" style="left:322.29999999999995px;width:300px;text-align:right;transform-origin:100% 50%;top:252.69px;line-height:20px;font-size:8.25px;font-weight:normal;color:#40464c;transform:scaleX(0.9091);-webkit-text-stroke:0.2px #40464c;">0</div>
<div class="b" style="left:639.4px;top:252.29999999999998px;width:67.70000000000005px;height:19.99999999999997px;border:1px solid #e9ecf0;border-radius:2px;background:#fff;box-sizing:border-box;"></div>
<div class="t" style="left:398.20000000000005px;width:300px;text-align:right;transform-origin:100% 50%;top:252.69px;line-height:20px;font-size:8.25px;font-weight:normal;color:#40464c;transform:scaleX(0.9091);-webkit-text-stroke:0.2px #40464c;">25.000</div>
<div class="b" style="left:715.4px;top:252.29999999999998px;width:54.000000000000114px;height:19.99999999999997px;border:1px solid #e9ecf0;border-radius:2px;background:#fff;box-sizing:border-box;"></div>
<div class="t" style="left:460.70000000000005px;width:300px;text-align:right;transform-origin:100% 50%;top:252.69px;line-height:20px;font-size:8.25px;font-weight:normal;color:#40464c;transform:scaleX(0.9091);-webkit-text-stroke:0.2px #40464c;">0</div>
<div class="b" style="left:784.2px;top:252.89999999999998px;width:6.699999999999932px;height:6.800000000000011px;border:0.7px solid #9a9a9a;border-radius:1.5px;background:#fff;box-sizing:border-box;"></div>
<div class="b" style="left:81px;top:305.1px;width:723px;height:0.5px;background:#edf0f3;"></div>
<div class="t" style="left:85.6px;transform-origin:0 50%;top:276.15px;line-height:20px;font-size:8.42px;font-weight:normal;color:#212529;transform:scaleX(0.8850);-webkit-text-stroke:0.2px #212529;">4</div>
<div class="b" style="left:120.3px;top:280.65px;width:78.89999999999999px;height:20.0px;border:1px solid #e9ecf0;border-radius:2px;background:#fff;box-sizing:border-box;"></div>
<div class="t" style="left:9.400000000000006px;width:300px;text-align:center;transform-origin:50% 50%;top:281.05px;line-height:20px;font-size:8.58px;font-weight:normal;color:#40464c;transform:scaleX(0.9091);-webkit-text-stroke:0.2px #40464c;">21/04/2025 20:03</div>
<div class="t" style="left:88px;width:300px;text-align:center;transform-origin:50% 50%;top:276.15px;line-height:20px;font-size:8.42px;font-weight:normal;color:#212529;transform:scaleX(0.8850);-webkit-text-stroke:0.2px #212529;">2024-11-28</div>
<div class="t" style="left:88px;width:300px;text-align:center;transform-origin:50% 50%;top:287.15px;line-height:20px;font-size:8.42px;font-weight:normal;color:#212529;transform:scaleX(0.8850);-webkit-text-stroke:0.2px #212529;">22:46:39</div>
<div class="t" style="left:157.2px;width:300px;text-align:center;transform-origin:50% 50%;top:276.15px;line-height:20px;font-size:8.42px;font-weight:normal;color:#212529;transform:scaleX(0.8850);-webkit-text-stroke:0.2px #212529;">2024-12-06</div>
<div class="t" style="left:233.5px;width:300px;text-align:center;transform-origin:50% 50%;top:276.15px;line-height:20px;font-size:8.42px;font-weight:normal;color:#212529;transform:scaleX(0.8850);-webkit-text-stroke:0.2px #212529;">NR2411280001</div>
<div class="t" style="left:304px;width:300px;text-align:center;transform-origin:50% 50%;top:276.15px;line-height:20px;font-size:8.42px;font-weight:normal;color:#12bdd6;transform:scaleX(0.8850);-webkit-text-stroke:0.2px #12bdd6;">1</div>
<div class="b" style="left:487.2px;top:280.65px;width:68.10000000000008px;height:20.0px;border:1px solid #e9ecf0;border-radius:2px;background:#fff;box-sizing:border-box;"></div>
<div class="t" style="left:246.79999999999995px;width:300px;text-align:right;transform-origin:100% 50%;top:281.04px;line-height:20px;font-size:8.25px;font-weight:normal;color:#40464c;transform:scaleX(0.9091);-webkit-text-stroke:0.2px #40464c;">35.000</div>
<div class="b" style="left:563.4px;top:280.65px;width:67.70000000000005px;height:20.0px;border:1px solid #e9ecf0;border-radius:2px;background:#fff;box-sizing:border-box;"></div>
<div class="t" style="left:322.29999999999995px;width:300px;text-align:right;transform-origin:100% 50%;top:281.04px;line-height:20px;font-size:8.25px;font-weight:normal;color:#40464c;transform:scaleX(0.9091);-webkit-text-stroke:0.2px #40464c;">0</div>
<div class="b" style="left:639.4px;top:280.65px;width:67.70000000000005px;height:20.0px;border:1px solid #e9ecf0;border-radius:2px;background:#fff;box-sizing:border-box;"></div>
<div class="t" style="left:398.20000000000005px;width:300px;text-align:right;transform-origin:100% 50%;top:281.04px;line-height:20px;font-size:8.25px;font-weight:normal;color:#40464c;transform:scaleX(0.9091);-webkit-text-stroke:0.2px #40464c;">35.000</div>
<div class="b" style="left:715.4px;top:280.65px;width:54.000000000000114px;height:20.0px;border:1px solid #e9ecf0;border-radius:2px;background:#fff;box-sizing:border-box;"></div>
<div class="t" style="left:460.70000000000005px;width:300px;text-align:right;transform-origin:100% 50%;top:281.04px;line-height:20px;font-size:8.25px;font-weight:normal;color:#40464c;transform:scaleX(0.9091);-webkit-text-stroke:0.2px #40464c;">0</div>
<div class="b" style="left:784.2px;top:281.25px;width:6.699999999999932px;height:6.800000000000011px;border:0.7px solid #9a9a9a;border-radius:1.5px;background:#fff;box-sizing:border-box;"></div>
<div class="b" style="left:81px;top:305.6px;width:723px;height:28.350000000000023px;background:#f5f8fb;"></div>
<div class="b" style="left:81px;top:333.45000000000005px;width:723px;height:0.5px;background:#edf0f3;"></div>
<div class="t" style="left:85.6px;transform-origin:0 50%;top:304.50px;line-height:20px;font-size:8.42px;font-weight:normal;color:#212529;transform:scaleX(0.8850);-webkit-text-stroke:0.2px #212529;">5</div>
<div class="b" style="left:120.3px;top:309.0px;width:78.89999999999999px;height:20.0px;border:1px solid #e9ecf0;border-radius:2px;background:#fff;box-sizing:border-box;"></div>
<div class="t" style="left:9.400000000000006px;width:300px;text-align:center;transform-origin:50% 50%;top:309.40px;line-height:20px;font-size:8.58px;font-weight:normal;color:#40464c;transform:scaleX(0.9091);-webkit-text-stroke:0.2px #40464c;">21/04/2025 20:03</div>
<div class="t" style="left:88px;width:300px;text-align:center;transform-origin:50% 50%;top:304.50px;line-height:20px;font-size:8.42px;font-weight:normal;color:#212529;transform:scaleX(0.8850);-webkit-text-stroke:0.2px #212529;">2024-11-13</div>
<div class="t" style="left:88px;width:300px;text-align:center;transform-origin:50% 50%;top:315.50px;line-height:20px;font-size:8.42px;font-weight:normal;color:#212529;transform:scaleX(0.8850);-webkit-text-stroke:0.2px #212529;">22:45:11</div>
<div class="t" style="left:157.2px;width:300px;text-align:center;transform-origin:50% 50%;top:304.50px;line-height:20px;font-size:8.42px;font-weight:normal;color:#212529;transform:scaleX(0.8850);-webkit-text-stroke:0.2px #212529;">2024-11-27</div>
<div class="t" style="left:233.5px;width:300px;text-align:center;transform-origin:50% 50%;top:304.50px;line-height:20px;font-size:8.42px;font-weight:normal;color:#212529;transform:scaleX(0.8850);-webkit-text-stroke:0.2px #212529;">NR2411130001</div>
<div class="t" style="left:304px;width:300px;text-align:center;transform-origin:50% 50%;top:304.50px;line-height:20px;font-size:8.42px;font-weight:normal;color:#12bdd6;transform:scaleX(0.8850);-webkit-text-stroke:0.2px #12bdd6;">2</div>
<div class="b" style="left:487.2px;top:309.0px;width:68.10000000000008px;height:20.0px;border:1px solid #e9ecf0;border-radius:2px;background:#fff;box-sizing:border-box;"></div>
<div class="t" style="left:246.79999999999995px;width:300px;text-align:right;transform-origin:100% 50%;top:309.39px;line-height:20px;font-size:8.25px;font-weight:normal;color:#40464c;transform:scaleX(0.9091);-webkit-text-stroke:0.2px #40464c;">25.000</div>
<div class="b" style="left:563.4px;top:309.0px;width:67.70000000000005px;height:20.0px;border:1px solid #e9ecf0;border-radius:2px;background:#fff;box-sizing:border-box;"></div>
<div class="t" style="left:322.29999999999995px;width:300px;text-align:right;transform-origin:100% 50%;top:309.39px;line-height:20px;font-size:8.25px;font-weight:normal;color:#40464c;transform:scaleX(0.9091);-webkit-text-stroke:0.2px #40464c;">10.000</div>
<div class="b" style="left:639.4px;top:309.0px;width:67.70000000000005px;height:20.0px;border:1px solid #e9ecf0;border-radius:2px;background:#fff;box-sizing:border-box;"></div>
<div class="t" style="left:398.20000000000005px;width:300px;text-align:right;transform-origin:100% 50%;top:309.39px;line-height:20px;font-size:8.25px;font-weight:normal;color:#40464c;transform:scaleX(0.9091);-webkit-text-stroke:0.2px #40464c;">15.000</div>
<div class="b" style="left:715.4px;top:309.0px;width:54.000000000000114px;height:20.0px;border:1px solid #e9ecf0;border-radius:2px;background:#fff;box-sizing:border-box;"></div>
<div class="t" style="left:460.70000000000005px;width:300px;text-align:right;transform-origin:100% 50%;top:309.39px;line-height:20px;font-size:8.25px;font-weight:normal;color:#40464c;transform:scaleX(0.9091);-webkit-text-stroke:0.2px #40464c;">0</div>
<div class="b" style="left:784.2px;top:309.6px;width:6.699999999999932px;height:6.800000000000011px;border:0.7px solid #9a9a9a;border-radius:1.5px;background:#fff;box-sizing:border-box;"></div>
<div class="b" style="left:81px;top:361.8px;width:723px;height:0.5px;background:#edf0f3;"></div>
<div class="t" style="left:85.6px;transform-origin:0 50%;top:332.85px;line-height:20px;font-size:8.42px;font-weight:normal;color:#212529;transform:scaleX(0.8850);-webkit-text-stroke:0.2px #212529;">6</div>
<div class="b" style="left:120.3px;top:337.34999999999997px;width:78.89999999999999px;height:20.0px;border:1px solid #e9ecf0;border-radius:2px;background:#fff;box-sizing:border-box;"></div>
<div class="t" style="left:9.400000000000006px;width:300px;text-align:center;transform-origin:50% 50%;top:337.75px;line-height:20px;font-size:8.58px;font-weight:normal;color:#40464c;transform:scaleX(0.9091);-webkit-text-stroke:0.2px #40464c;">21/04/2025 20:03</div>
<div class="t" style="left:88px;width:300px;text-align:center;transform-origin:50% 50%;top:332.85px;line-height:20px;font-size:8.42px;font-weight:normal;color:#212529;transform:scaleX(0.8850);-webkit-text-stroke:0.2px #212529;">2024-09-28</div>
<div class="t" style="left:88px;width:300px;text-align:center;transform-origin:50% 50%;top:343.85px;line-height:20px;font-size:8.42px;font-weight:normal;color:#212529;transform:scaleX(0.8850);-webkit-text-stroke:0.2px #212529;">15:44:42</div>
<div class="t" style="left:157.2px;width:300px;text-align:center;transform-origin:50% 50%;top:332.85px;line-height:20px;font-size:8.42px;font-weight:normal;color:#212529;transform:scaleX(0.8850);-webkit-text-stroke:0.2px #212529;">2024-10-05</div>
<div class="t" style="left:233.5px;width:300px;text-align:center;transform-origin:50% 50%;top:332.85px;line-height:20px;font-size:8.42px;font-weight:normal;color:#212529;transform:scaleX(0.8850);-webkit-text-stroke:0.2px #212529;">NR2409280002</div>
<div class="t" style="left:304px;width:300px;text-align:center;transform-origin:50% 50%;top:332.85px;line-height:20px;font-size:8.42px;font-weight:normal;color:#12bdd6;transform:scaleX(0.8850);-webkit-text-stroke:0.2px #12bdd6;">1</div>
<div class="b" style="left:487.2px;top:337.34999999999997px;width:68.10000000000008px;height:20.0px;border:1px solid #e9ecf0;border-radius:2px;background:#fff;box-sizing:border-box;"></div>
<div class="t" style="left:246.79999999999995px;width:300px;text-align:right;transform-origin:100% 50%;top:337.74px;line-height:20px;font-size:8.25px;font-weight:normal;color:#40464c;transform:scaleX(0.9091);-webkit-text-stroke:0.2px #40464c;">70.000</div>
<div class="b" style="left:563.4px;top:337.34999999999997px;width:67.70000000000005px;height:20.0px;border:1px solid #e9ecf0;border-radius:2px;background:#fff;box-sizing:border-box;"></div>
<div class="t" style="left:322.29999999999995px;width:300px;text-align:right;transform-origin:100% 50%;top:337.74px;line-height:20px;font-size:8.25px;font-weight:normal;color:#40464c;transform:scaleX(0.9091);-webkit-text-stroke:0.2px #40464c;">0</div>
<div class="b" style="left:639.4px;top:337.34999999999997px;width:67.70000000000005px;height:20.0px;border:1px solid #e9ecf0;border-radius:2px;background:#fff;box-sizing:border-box;"></div>
<div class="t" style="left:398.20000000000005px;width:300px;text-align:right;transform-origin:100% 50%;top:337.74px;line-height:20px;font-size:8.25px;font-weight:normal;color:#40464c;transform:scaleX(0.9091);-webkit-text-stroke:0.2px #40464c;">70.000</div>
<div class="b" style="left:715.4px;top:337.34999999999997px;width:54.000000000000114px;height:20.0px;border:1px solid #e9ecf0;border-radius:2px;background:#fff;box-sizing:border-box;"></div>
<div class="t" style="left:460.70000000000005px;width:300px;text-align:right;transform-origin:100% 50%;top:337.74px;line-height:20px;font-size:8.25px;font-weight:normal;color:#40464c;transform:scaleX(0.9091);-webkit-text-stroke:0.2px #40464c;">0</div>
<div class="b" style="left:784.2px;top:337.95px;width:6.699999999999932px;height:6.800000000000011px;border:0.7px solid #9a9a9a;border-radius:1.5px;background:#fff;box-sizing:border-box;"></div>
<div class="b" style="left:81px;top:362.3px;width:723px;height:28.350000000000023px;background:#f5f8fb;"></div>
<div class="b" style="left:81px;top:390.15000000000003px;width:723px;height:0.5px;background:#edf0f3;"></div>
<div class="t" style="left:85.6px;transform-origin:0 50%;top:361.20px;line-height:20px;font-size:8.42px;font-weight:normal;color:#212529;transform:scaleX(0.8850);-webkit-text-stroke:0.2px #212529;">7</div>
<div class="b" style="left:120.3px;top:365.7px;width:78.89999999999999px;height:20.0px;border:1px solid #e9ecf0;border-radius:2px;background:#fff;box-sizing:border-box;"></div>
<div class="t" style="left:9.400000000000006px;width:300px;text-align:center;transform-origin:50% 50%;top:366.10px;line-height:20px;font-size:8.58px;font-weight:normal;color:#40464c;transform:scaleX(0.9091);-webkit-text-stroke:0.2px #40464c;">21/04/2025 20:03</div>
<div class="t" style="left:88px;width:300px;text-align:center;transform-origin:50% 50%;top:361.20px;line-height:20px;font-size:8.42px;font-weight:normal;color:#212529;transform:scaleX(0.8850);-webkit-text-stroke:0.2px #212529;">2024-09-17</div>
<div class="t" style="left:88px;width:300px;text-align:center;transform-origin:50% 50%;top:372.20px;line-height:20px;font-size:8.42px;font-weight:normal;color:#212529;transform:scaleX(0.8850);-webkit-text-stroke:0.2px #212529;">10:14:02</div>
<div class="t" style="left:157.2px;width:300px;text-align:center;transform-origin:50% 50%;top:361.20px;line-height:20px;font-size:8.42px;font-weight:normal;color:#212529;transform:scaleX(0.8850);-webkit-text-stroke:0.2px #212529;">2024-10-01</div>
<div class="t" style="left:233.5px;width:300px;text-align:center;transform-origin:50% 50%;top:361.20px;line-height:20px;font-size:8.42px;font-weight:normal;color:#212529;transform:scaleX(0.8850);-webkit-text-stroke:0.2px #212529;">NR2409170001</div>
<div class="t" style="left:304px;width:300px;text-align:center;transform-origin:50% 50%;top:361.20px;line-height:20px;font-size:8.42px;font-weight:normal;color:#12bdd6;transform:scaleX(0.8850);-webkit-text-stroke:0.2px #12bdd6;">1</div>
<div class="b" style="left:487.2px;top:365.7px;width:68.10000000000008px;height:20.0px;border:1px solid #e9ecf0;border-radius:2px;background:#fff;box-sizing:border-box;"></div>
<div class="t" style="left:246.79999999999995px;width:300px;text-align:right;transform-origin:100% 50%;top:366.09px;line-height:20px;font-size:8.25px;font-weight:normal;color:#40464c;transform:scaleX(0.9091);-webkit-text-stroke:0.2px #40464c;">10.000</div>
<div class="b" style="left:563.4px;top:365.7px;width:67.70000000000005px;height:20.0px;border:1px solid #e9ecf0;border-radius:2px;background:#fff;box-sizing:border-box;"></div>
<div class="t" style="left:322.29999999999995px;width:300px;text-align:right;transform-origin:100% 50%;top:366.09px;line-height:20px;font-size:8.25px;font-weight:normal;color:#40464c;transform:scaleX(0.9091);-webkit-text-stroke:0.2px #40464c;">0</div>
<div class="b" style="left:639.4px;top:365.7px;width:67.70000000000005px;height:20.0px;border:1px solid #e9ecf0;border-radius:2px;background:#fff;box-sizing:border-box;"></div>
<div class="t" style="left:398.20000000000005px;width:300px;text-align:right;transform-origin:100% 50%;top:366.09px;line-height:20px;font-size:8.25px;font-weight:normal;color:#40464c;transform:scaleX(0.9091);-webkit-text-stroke:0.2px #40464c;">10.000</div>
<div class="b" style="left:715.4px;top:365.7px;width:54.000000000000114px;height:20.0px;border:1px solid #e9ecf0;border-radius:2px;background:#fff;box-sizing:border-box;"></div>
<div class="t" style="left:460.70000000000005px;width:300px;text-align:right;transform-origin:100% 50%;top:366.09px;line-height:20px;font-size:8.25px;font-weight:normal;color:#40464c;transform:scaleX(0.9091);-webkit-text-stroke:0.2px #40464c;">0</div>
<div class="b" style="left:784.2px;top:366.3px;width:6.699999999999932px;height:6.800000000000011px;border:0.7px solid #9a9a9a;border-radius:1.5px;background:#fff;box-sizing:border-box;"></div>
<div class="b" style="left:81px;top:418.5px;width:723px;height:0.5px;background:#edf0f3;"></div>
<div class="t" style="left:85.6px;transform-origin:0 50%;top:389.55px;line-height:20px;font-size:8.42px;font-weight:normal;color:#212529;transform:scaleX(0.8850);-webkit-text-stroke:0.2px #212529;">8</div>
<div class="b" style="left:120.3px;top:394.04999999999995px;width:78.89999999999999px;height:20.0px;border:1px solid #e9ecf0;border-radius:2px;background:#fff;box-sizing:border-box;"></div>
<div class="t" style="left:9.400000000000006px;width:300px;text-align:center;transform-origin:50% 50%;top:394.45px;line-height:20px;font-size:8.58px;font-weight:normal;color:#40464c;transform:scaleX(0.9091);-webkit-text-stroke:0.2px #40464c;">21/04/2025 20:03</div>
<div class="t" style="left:88px;width:300px;text-align:center;transform-origin:50% 50%;top:389.55px;line-height:20px;font-size:8.42px;font-weight:normal;color:#212529;transform:scaleX(0.8850);-webkit-text-stroke:0.2px #212529;">2024-09-12</div>
<div class="t" style="left:88px;width:300px;text-align:center;transform-origin:50% 50%;top:400.55px;line-height:20px;font-size:8.42px;font-weight:normal;color:#212529;transform:scaleX(0.8850);-webkit-text-stroke:0.2px #212529;">14:15:24</div>
<div class="t" style="left:157.2px;width:300px;text-align:center;transform-origin:50% 50%;top:389.55px;line-height:20px;font-size:8.42px;font-weight:normal;color:#212529;transform:scaleX(0.8850);-webkit-text-stroke:0.2px #212529;">2024-09-28</div>
<div class="t" style="left:233.5px;width:300px;text-align:center;transform-origin:50% 50%;top:389.55px;line-height:20px;font-size:8.42px;font-weight:normal;color:#212529;transform:scaleX(0.8850);-webkit-text-stroke:0.2px #212529;">NR2409120001</div>
<div class="t" style="left:304px;width:300px;text-align:center;transform-origin:50% 50%;top:389.55px;line-height:20px;font-size:8.42px;font-weight:normal;color:#12bdd6;transform:scaleX(0.8850);-webkit-text-stroke:0.2px #12bdd6;">1</div>
<div class="b" style="left:487.2px;top:394.04999999999995px;width:68.10000000000008px;height:20.0px;border:1px solid #e9ecf0;border-radius:2px;background:#fff;box-sizing:border-box;"></div>
<div class="t" style="left:246.79999999999995px;width:300px;text-align:right;transform-origin:100% 50%;top:394.44px;line-height:20px;font-size:8.25px;font-weight:normal;color:#40464c;transform:scaleX(0.9091);-webkit-text-stroke:0.2px #40464c;">485.000</div>
<div class="b" style="left:563.4px;top:394.04999999999995px;width:67.70000000000005px;height:20.0px;border:1px solid #e9ecf0;border-radius:2px;background:#fff;box-sizing:border-box;"></div>
<div class="t" style="left:322.29999999999995px;width:300px;text-align:right;transform-origin:100% 50%;top:394.44px;line-height:20px;font-size:8.25px;font-weight:normal;color:#40464c;transform:scaleX(0.9091);-webkit-text-stroke:0.2px #40464c;">0</div>
<div class="b" style="left:639.4px;top:394.04999999999995px;width:67.70000000000005px;height:20.0px;border:1px solid #e9ecf0;border-radius:2px;background:#fff;box-sizing:border-box;"></div>
<div class="t" style="left:398.20000000000005px;width:300px;text-align:right;transform-origin:100% 50%;top:394.44px;line-height:20px;font-size:8.25px;font-weight:normal;color:#40464c;transform:scaleX(0.9091);-webkit-text-stroke:0.2px #40464c;">485.000</div>
<div class="b" style="left:715.4px;top:394.04999999999995px;width:54.000000000000114px;height:20.0px;border:1px solid #e9ecf0;border-radius:2px;background:#fff;box-sizing:border-box;"></div>
<div class="t" style="left:460.70000000000005px;width:300px;text-align:right;transform-origin:100% 50%;top:394.44px;line-height:20px;font-size:8.25px;font-weight:normal;color:#40464c;transform:scaleX(0.9091);-webkit-text-stroke:0.2px #40464c;">0</div>
<div class="b" style="left:784.2px;top:394.65px;width:6.699999999999932px;height:6.800000000000011px;border:0.7px solid #9a9a9a;border-radius:1.5px;background:#fff;box-sizing:border-box;"></div>
<div class="b" style="left:81px;top:419.0px;width:723px;height:28.350000000000023px;background:#f5f8fb;"></div>
<div class="b" style="left:81px;top:446.85px;width:723px;height:0.5px;background:#edf0f3;"></div>
<div class="t" style="left:85.6px;transform-origin:0 50%;top:417.90px;line-height:20px;font-size:8.42px;font-weight:normal;color:#212529;transform:scaleX(0.8850);-webkit-text-stroke:0.2px #212529;">9</div>
<div class="b" style="left:120.3px;top:422.4px;width:78.89999999999999px;height:20.0px;border:1px solid #e9ecf0;border-radius:2px;background:#fff;box-sizing:border-box;"></div>
<div class="t" style="left:9.400000000000006px;width:300px;text-align:center;transform-origin:50% 50%;top:422.80px;line-height:20px;font-size:8.58px;font-weight:normal;color:#40464c;transform:scaleX(0.9091);-webkit-text-stroke:0.2px #40464c;">21/04/2025 20:03</div>
<div class="t" style="left:88px;width:300px;text-align:center;transform-origin:50% 50%;top:417.90px;line-height:20px;font-size:8.42px;font-weight:normal;color:#212529;transform:scaleX(0.8850);-webkit-text-stroke:0.2px #212529;">2024-08-26</div>
<div class="t" style="left:88px;width:300px;text-align:center;transform-origin:50% 50%;top:428.90px;line-height:20px;font-size:8.42px;font-weight:normal;color:#212529;transform:scaleX(0.8850);-webkit-text-stroke:0.2px #212529;">04:36:50</div>
<div class="t" style="left:157.2px;width:300px;text-align:center;transform-origin:50% 50%;top:417.90px;line-height:20px;font-size:8.42px;font-weight:normal;color:#212529;transform:scaleX(0.8850);-webkit-text-stroke:0.2px #212529;">2024-08-31</div>
<div class="t" style="left:233.5px;width:300px;text-align:center;transform-origin:50% 50%;top:417.90px;line-height:20px;font-size:8.42px;font-weight:normal;color:#212529;transform:scaleX(0.8850);-webkit-text-stroke:0.2px #212529;">NR2408260002</div>
<div class="t" style="left:304px;width:300px;text-align:center;transform-origin:50% 50%;top:417.90px;line-height:20px;font-size:8.42px;font-weight:normal;color:#12bdd6;transform:scaleX(0.8850);-webkit-text-stroke:0.2px #12bdd6;">1</div>
<div class="b" style="left:487.2px;top:422.4px;width:68.10000000000008px;height:20.0px;border:1px solid #e9ecf0;border-radius:2px;background:#fff;box-sizing:border-box;"></div>
<div class="t" style="left:246.79999999999995px;width:300px;text-align:right;transform-origin:100% 50%;top:422.79px;line-height:20px;font-size:8.25px;font-weight:normal;color:#40464c;transform:scaleX(0.9091);-webkit-text-stroke:0.2px #40464c;">208.000</div>
<div class="b" style="left:563.4px;top:422.4px;width:67.70000000000005px;height:20.0px;border:1px solid #e9ecf0;border-radius:2px;background:#fff;box-sizing:border-box;"></div>
<div class="t" style="left:322.29999999999995px;width:300px;text-align:right;transform-origin:100% 50%;top:422.79px;line-height:20px;font-size:8.25px;font-weight:normal;color:#40464c;transform:scaleX(0.9091);-webkit-text-stroke:0.2px #40464c;">0</div>
<div class="b" style="left:639.4px;top:422.4px;width:67.70000000000005px;height:20.0px;border:1px solid #e9ecf0;border-radius:2px;background:#fff;box-sizing:border-box;"></div>
<div class="t" style="left:398.20000000000005px;width:300px;text-align:right;transform-origin:100% 50%;top:422.79px;line-height:20px;font-size:8.25px;font-weight:normal;color:#40464c;transform:scaleX(0.9091);-webkit-text-stroke:0.2px #40464c;">208.000</div>
<div class="b" style="left:715.4px;top:422.4px;width:54.000000000000114px;height:20.0px;border:1px solid #e9ecf0;border-radius:2px;background:#fff;box-sizing:border-box;"></div>
<div class="t" style="left:460.70000000000005px;width:300px;text-align:right;transform-origin:100% 50%;top:422.79px;line-height:20px;font-size:8.25px;font-weight:normal;color:#40464c;transform:scaleX(0.9091);-webkit-text-stroke:0.2px #40464c;">0</div>
<div class="b" style="left:784.2px;top:423.0px;width:6.699999999999932px;height:6.800000000000011px;border:0.7px solid #9a9a9a;border-radius:1.5px;background:#fff;box-sizing:border-box;"></div>
<div class="t" style="left:85.7px;transform-origin:0 50%;top:447.49px;line-height:20px;font-size:8.25px;font-weight:normal;color:#212529;transform:scaleX(0.9524);-webkit-text-stroke:0.2px #212529;">Total</div>
<div class="t" style="left:254.79999999999995px;width:300px;text-align:right;transform-origin:100% 50%;top:452.12px;line-height:20px;font-size:10.10px;font-weight:bold;color:#343a40;">989.415</div>
<div class="t" style="left:330.20000000000005px;width:300px;text-align:right;transform-origin:100% 50%;top:452.12px;line-height:20px;font-size:10.10px;font-weight:bold;color:#343a40;">10.000</div>
<div class="t" style="left:406.20000000000005px;width:300px;text-align:right;transform-origin:100% 50%;top:452.12px;line-height:20px;font-size:10.10px;font-weight:bold;color:#343a40;">979.415</div>
<div class="t" style="left:468.70000000000005px;width:300px;text-align:right;transform-origin:100% 50%;top:452.12px;line-height:20px;font-size:10.10px;font-weight:bold;color:#343a40;">0</div>
<div class="b" style="left:66px;top:496px;width:753px;height:1px;background:#eef0f3;"></div>
<div class="b" style="left:734.4px;top:506px;width:39.10000000000002px;height:19px;background:#eaedf0;border-radius:2px;"></div>
<div class="t" style="left:604px;width:300px;text-align:center;transform-origin:50% 50%;top:505.59px;line-height:20px;font-size:8.03px;font-weight:normal;color:#343a40;transform:scaleX(0.9091);-webkit-text-stroke:0.3px #343a40;">Cancel</div>
<div class="b" style="left:778px;top:506px;width:32.200000000000045px;height:19px;background:#00bcd4;border-radius:2px;"></div>
<div class="t" style="left:644.3px;width:300px;text-align:center;transform-origin:50% 50%;top:505.59px;line-height:20px;font-size:7.70px;font-weight:normal;color:#fff;transform:scaleX(0.9091);-webkit-text-stroke:0.3px #fff;">Save</div>
</div>
</body></html>
